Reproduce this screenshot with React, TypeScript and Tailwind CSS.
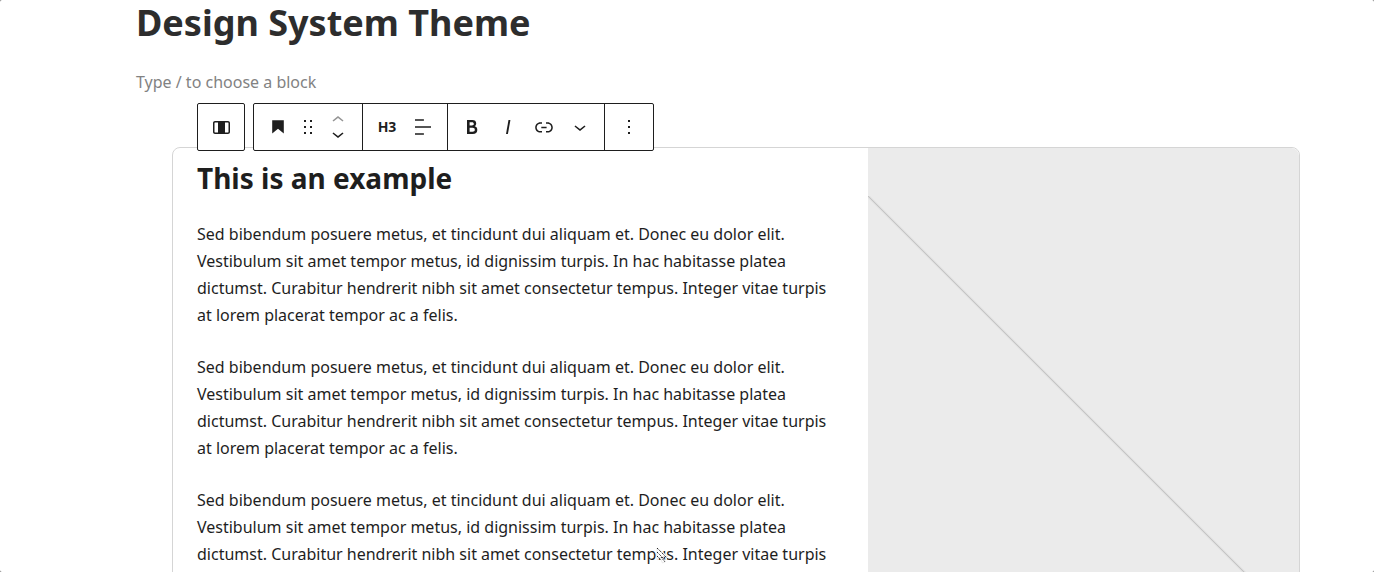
import type { ReactNode } from "react";

const PARAGRAPH =
  "Sed bibendum posuere metus, et tincidunt dui aliquam et. Donec eu dolor elit. Vestibulum sit amet tempor metus, id dignissim turpis. In hac habitasse platea dictumst. Curabitur hendrerit nibh sit amet consectetur tempus. Integer vitae turpis at lorem placerat tempor ac a felis.";

function Icon({ d }: { d: string }) {
  return (
    <svg viewBox="0 0 24 24" className="size-6 shrink-0 fill-current" aria-hidden="true">
      <path d={d} />
    </svg>
  );
}

function ToolButton({ label, width, children }: { label: string; width: string; children: ReactNode }) {
  return (
    <button type="button" aria-label={label} className={`flex h-full items-center justify-center ${width}`}>
      {children}
    </button>
  );
}

function BlockToolbar() {
  return (
    <div role="toolbar" aria-label="Block tools" className="absolute -top-[45px] left-6 flex h-12 gap-2 text-[#1e1e1e]">
      <div className="flex rounded-xs border border-[#1e1e1e] bg-white">
        <ToolButton label="Select parent block: Column" width="w-[46px]">
          <Icon d="M19 6H6c-1.1 0-2 .9-2 2v9c0 1.1.9 2 2 2h13c1.1 0 2-.9 2-2V8c0-1.1-.9-2-2-2zM6 17.5c-.3 0-.5-.2-.5-.5V8c0-.3.2-.5.5-.5h3v10H6zm13.5-.5c0 .3-.2.5-.5.5h-3v-10h3c.3 0 .5.2.5.5v9z" />
        </ToolButton>
      </div>
      <div className="flex divide-x divide-[#1e1e1e] rounded-xs border border-[#1e1e1e] bg-white">
        <div className="flex px-3">
          <ToolButton label="Heading" width="w-6">
            <Icon d="M6.2 5.2v13.4l5.8-4.8 5.8 4.8V5.2z" />
          </ToolButton>
          <ToolButton label="Drag" width="w-9">
            <Icon d="M8 7h2V5H8v2zm0 6h2v-2H8v2zm0 6h2v-2H8v2zm6-14v2h2V5h-2zm0 8h2v-2h-2v2zm0 6h2v-2h-2v2z" />
          </ToolButton>
          <div className="flex w-6 flex-col">
            <button type="button" aria-label="Move up" disabled className="flex flex-1 items-end justify-center pb-1 text-[#949494]">
              <svg viewBox="5 7 14 8" className="h-2 w-3.5 fill-current" aria-hidden="true">
                <path d="M6.5 12.4L12 8l5.5 4.4-.9 1.2L12 10l-4.5 3.6-1-1.2z" />
              </svg>
            </button>
            <button type="button" aria-label="Move down" className="flex flex-1 items-start justify-center pt-1">
              <svg viewBox="5 9 14 8" className="h-2 w-3.5 fill-current" aria-hidden="true">
                <path d="M17.5 11.6L12 16l-5.5-4.4.9-1.2L12 14l4.5-3.6 1 1.2z" />
              </svg>
            </button>
          </div>
        </div>
        <div className="flex px-1.5">
          <ToolButton label="Change heading level" width="w-9">
            <span className="text-sm font-bold">H3</span>
          </ToolButton>
          <ToolButton label="Align text" width="w-9">
            <Icon d="M4 19.8h8.9v-1.5H4v1.5zm8.9-15.6H4v1.5h8.9V4.2zm-8.9 7v1.5h16v-1.5H4z" />
          </ToolButton>
        </div>
        <div className="flex px-1.5">
          <ToolButton label="Bold" width="w-9">
            <Icon d="M14.7 11.3c1-.6 1.5-1.6 1.5-3 0-2.3-1.3-3.4-4-3.4H7v14h5.8c1.4 0 2.5-.3 3.3-1 .8-.7 1.2-1.7 1.2-2.9.1-1.9-.8-3.1-2.6-3.7zm-5.1-4h2.3c.6 0 1.1.1 1.4.4.3.3.5.7.5 1.2s-.2 1-.5 1.2c-.3.3-.8.4-1.4.4H9.6V7.3zm4.6 9c-.4.3-1 .4-1.7.4H9.6v-3.9h2.9c.7 0 1.3.2 1.7.5.4.3.6.8.6 1.5s-.2 1.2-.6 1.5z" />
          </ToolButton>
          <ToolButton label="Italic" width="w-9">
            <Icon d="M12.5 5L10 19h1.9l2.5-14z" />
          </ToolButton>
          <ToolButton label="Link" width="w-9">
            <Icon d="M15.6 7.2H14v1.5h1.6c2 0 3.7 1.7 3.7 3.7s-1.7 3.7-3.7 3.7H14v1.5h1.6c2.8 0 5.2-2.3 5.2-5.2 0-2.9-2.3-5.2-5.2-5.2zM4.7 12.4c0-2 1.7-3.7 3.7-3.7H10V7.2H8.4c-2.9 0-5.2 2.3-5.2 5.2 0 2.9 2.3 5.2 5.2 5.2H10v-1.5H8.4c-2 0-3.7-1.7-3.7-3.7zm4.6.9h5.3v-1.5H9.3v1.5z" />
          </ToolButton>
          <ToolButton label="More formatting" width="w-9">
            <Icon d="M17.5 11.6L12 16l-5.5-4.4.9-1.2L12 14l4.5-3.6 1 1.2z" />
          </ToolButton>
        </div>
        <ToolButton label="Options" width="w-12">
          <Icon d="M13 19h-2v-2h2v2zm0-6h-2v-2h2v2zm0-6h-2V5h2v2z" />
        </ToolButton>
      </div>
    </div>
  );
}

function Pointer() {
  return (
    <svg viewBox="0 0 14 18" className="pointer-events-none absolute top-[399px] left-[483px] h-[18px] w-3.5" aria-hidden="true">
      <path d="M1 1v12l3-2.600 2.500 5.600 2.800-1.200-2.400-5.300H12z" fill="#fff" stroke="#e2e2e2" strokeWidth="0.800" />
      <path d="M1 1l11 11M1 5l7 7M1 9l3 3M5 10l4 5" stroke="#222" strokeWidth="1" strokeDasharray="1.400 0.900" fill="none" />
    </svg>
  );
}

export default function App() {
  return (
    <div className="h-screen bg-[#777777] font-['Noto_Sans',sans-serif] text-base text-[#1e1e1e]">
      <main className="h-full overflow-hidden rounded-xs bg-white pr-[74px] pl-[136px]">
        <h1 className="text-4xl leading-[46px] font-bold text-[#2d2d2d]">Design System Theme</h1>
        <p className="mt-[23px] leading-[27px] text-[#828282]">Type / to choose a block</p>
        <section className="relative mt-[51px] ml-9 rounded-lg border border-[#d5d5d5]">
          <div className="flex">
            <div className="min-w-0 flex-1 px-6 pt-[11px] pb-6">
              <h3 className="text-[28px] leading-[38px] font-bold">This is an example</h3>
              <div className="mt-6 flex flex-col gap-[25px] leading-[27px]">
                <p>{PARAGRAPH}</p>
                <p>{PARAGRAPH}</p>
                <p>{PARAGRAPH}</p>
              </div>
            </div>
            <div className="w-[431px] overflow-hidden rounded-r-lg bg-[#ebebeb]">
              <svg className="mt-12 h-[431px] w-[431px]" viewBox="0 0 431 431" aria-hidden="true">
                <path d="M0 0L431 431" stroke="#dcdcdc" strokeWidth="2.500" />
                <path d="M0 0L431 431" stroke="#c4c4c4" strokeWidth="1" />
              </svg>
            </div>
          </div>
          <BlockToolbar />
          <Pointer />
        </section>
      </main>
    </div>
  );
}
